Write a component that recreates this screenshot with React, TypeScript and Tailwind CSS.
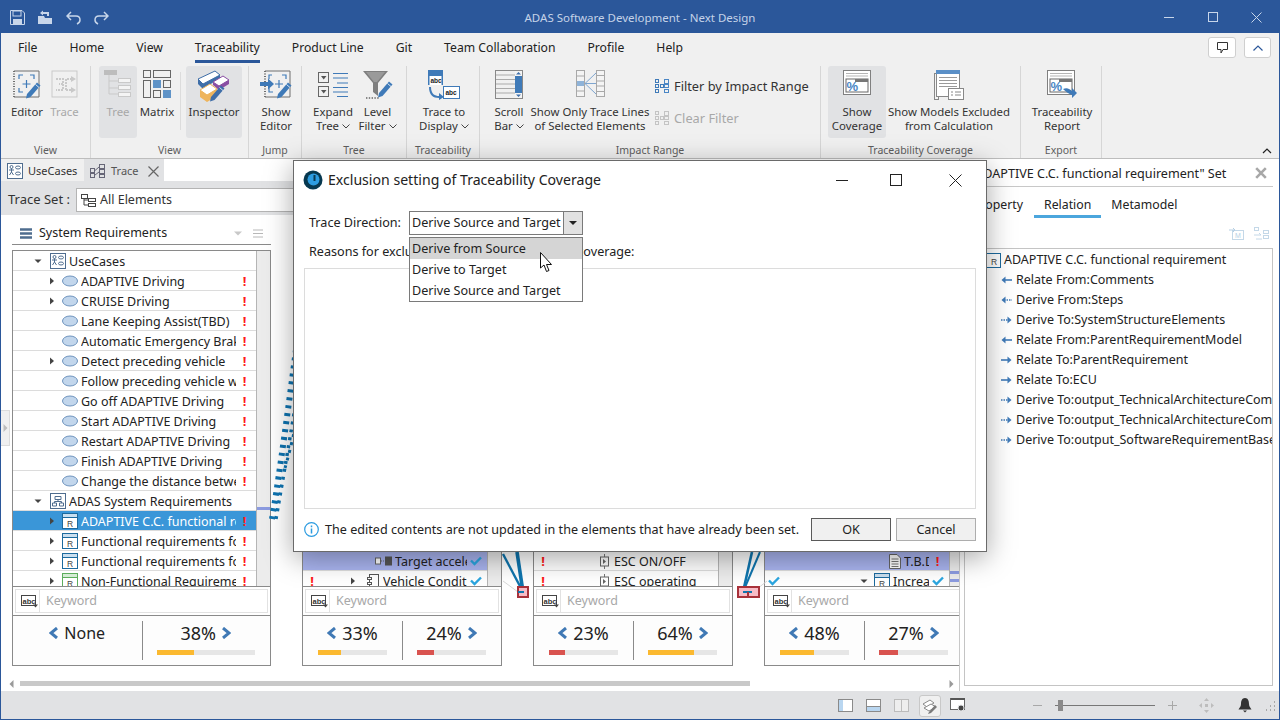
import type { ReactNode } from 'react';

const BLUE = '#3f7ab8';
const GREY = '#6e6e6e';

function Svg({ w, h, children, className }: { w: number; h: number; children: ReactNode; className?: string }) {
  return (
    <svg width={w} height={h} viewBox={`0 0 ${w} ${h}`} fill="none" className={className ? `shrink-0 ${className}` : 'shrink-0'}>
      {children}
    </svg>
  );
}

function Pencil({ x = 0, y = 0, c = BLUE }: { x?: number; y?: number; c?: string }) {
  return (
    <g transform={`translate(${x} ${y})`}>
      <path d="M2 14 L12 2.5 L15.5 5.5 L5.5 17 L1 18.5Z" fill={c} />
      <path d="M10.5 4.5 L14 7.5" stroke="#fff" strokeWidth="0.8" />
    </g>
  );
}

function DashBox({ c = GREY }: { c?: string }) {
  return (
    <>
      <path d="M2 1H27V27H2" stroke={c} strokeWidth="1" />
      <path d="M2 1V27" stroke={c} strokeWidth="2" strokeDasharray="1 1.5" />
    </>
  );
}

function EditorIcon() {
  return (
    <Svg w={31} h={30}>
      <DashBox />
      <path d="M7 9V5H11M18 5H22V9M7 18V22H11" stroke={BLUE} strokeWidth="1.2" />
      <path d="M14.5 10V18M10.5 14H18.5" stroke={BLUE} strokeWidth="1.2" />
      <Pencil x={13} y={10} />
    </Svg>
  );
}

function ShowEditorIcon() {
  return (
    <Svg w={33} h={30}>
      <g transform="translate(3 0)">
        <DashBox />
        <path d="M9 5H6V9M19 5H23V9M6 18V22H10" stroke={BLUE} strokeWidth="1.2" />
        <path d="M16 10V18M12 14H20" stroke={BLUE} strokeWidth="1.2" />
        <Pencil x={13} y={10} />
      </g>
      <path d="M0 12H8V8.5L14 14L8 19.5V16H0Z" fill={BLUE} />
    </Svg>
  );
}

function TraceIcon() {
  return (
    <Svg w={28} h={28}>
      <rect x="1" y="1" width="25" height="26" stroke="#c9c9c9" />
      <path d="M5 9H12V20H5M12 14H8M15 20V9H20M15 20H20" stroke="#c9c9c9" strokeWidth="2" strokeDasharray="2 1" />
      <path d="M20 6L25 9L20 12ZM20 17L25 20L20 23Z" fill="#c9c9c9" />
    </Svg>
  );
}

function TreeIcon() {
  return (
    <Svg w={28} h={28}>
      <rect x="0" y="0" width="13" height="5" fill="#bdbdbd" />
      <path d="M5 5V24H14M5 11H14M5 18H14" stroke="#c9c9c9" />
      <rect x="14.5" y="8.5" width="12" height="4" stroke="#c9c9c9" fill="#f4f4f4" />
      <rect x="14.5" y="15.5" width="12" height="4" stroke="#c9c9c9" fill="#f4f4f4" />
      <rect x="14.5" y="22.5" width="12" height="4" stroke="#c9c9c9" fill="#f4f4f4" />
    </Svg>
  );
}

function MatrixIcon() {
  return (
    <Svg w={28} h={29}>
      <g stroke="#666">
        <rect x="0.5" y="0.5" width="7" height="7" />
        <rect x="10.5" y="0.5" width="17" height="7" />
        <rect x="0.5" y="10.5" width="7" height="17" />
        <rect x="20.5" y="10.5" width="7" height="7" />
        <rect x="10.5" y="20.5" width="7" height="7" />
      </g>
      <rect x="10" y="10" width="8" height="8" fill="#5f93c7" />
      <rect x="20" y="20" width="8" height="8" fill="#5f93c7" />
    </Svg>
  );
}

function InspectorIcon() {
  return (
    <Svg w={34} h={32}>
      <path d="M1 9L18 1L23 5L6 14Z" fill="#fff" stroke="#3f6ea8" />
      <path d="M1 9V14L6 19V14Z" fill="#3f6ea8" />
      <path d="M6 14L23 5V8L6 19Z" fill="#3f6ea8" />
      <path d="M16 12L26 6L32 10L22 16Z" fill="#fff" stroke="#8a4ea3" />
      <path d="M16 12V15L22 20L32 14V10L22 16Z" fill="#8a4ea3" />
      <path d="M3 20L13 14L20 19L10 25Z" fill="#fff" stroke="#eeb45c" />
      <path d="M3 20V27L10 32L20 26V19L10 25Z" fill="#eeb45c" />
      <Pencil x={12} y={13} c="#3f6ea8" />
    </Svg>
  );
}

function ExpandTreeIcon() {
  return (
    <Svg w={31} h={28}>
      <rect x="0.5" y="2.5" width="10" height="10" stroke="#666" />
      <rect x="0.5" y="16.5" width="10" height="10" stroke="#666" />
      <path d="M3 6H8.5L5.7 9.5ZM3 20H8.5L5.7 23.5Z" fill="#555" />
      <path d="M15 3.5H30M15 8H30M19 13H30M15 17.5H30M15 22H30M19 26.5H30" stroke={BLUE} />
    </Svg>
  );
}

function LevelFilterIcon() {
  return (
    <Svg w={32} h={30}>
      <path d="M1 1H26L16 13V26L11 22V13Z" fill="#7f7f7f" />
      <path d="M4 2H23L15 12H12Z" fill="#9a9a9a" />
      <Pencil x={15} y={9} />
      <path d="M4 28H18" stroke="#666" strokeWidth="1.4" strokeDasharray="1.4 1.4" />
    </Svg>
  );
}

function TraceDisplayIcon() {
  return (
    <Svg w={33} h={30}>
      <rect x="0" y="0" width="15" height="15" fill="#3f7ab8" />
      <rect x="1.5" y="6" width="12" height="9" fill="#fff" />
      <text x="2.5" y="13" fontSize="6.5" fontWeight="700" fill="#222" fontFamily="Liberation Sans">abc</text>
      <rect x="15.5" y="16.5" width="16" height="12" fill="#fff" stroke={BLUE} />
      <text x="17.5" y="25" fontSize="6.5" fontWeight="700" fill="#222" fontFamily="Liberation Sans">abc</text>
      <path d="M3 17C3 24 7 26 11 26V23L16 27L11 30V28C5 28 1 25 1 17Z" fill={BLUE} />
    </Svg>
  );
}

function ScrollBarIcon() {
  return (
    <Svg w={28} h={29}>
      <rect x="0.5" y="0.5" width="27" height="28" stroke="#888" />
      <path d="M1 5H20M1 9.5H20M1 14H20M1 18.5H20M1 23H20" stroke="#aaa" />
      <rect x="20" y="1" width="7" height="27" fill="#f4f4f4" />
      <rect x="20" y="6" width="7" height="17" fill="#3f7ab8" />
      <path d="M21 4.5L23.5 2L26 4.5ZM21 24.5L23.5 27L26 24.5Z" fill="#3f6ea8" />
    </Svg>
  );
}

function ShowOnlyIcon() {
  return (
    <Svg w={29} h={27}>
      <g stroke="#a8a8a8" fill="#f4f4f4">
        <rect x="0.5" y="0.5" width="8" height="26" />
        <rect x="20.5" y="0.5" width="8" height="26" />
      </g>
      <path d="M1 6H8M1 21H8M21 5.5H28M21 11H28M21 16H28M21 21.5H28" stroke="#a8a8a8" />
      <rect x="1" y="11" width="7" height="5" fill="#8fb3d8" />
      <path d="M9 13.5L20 3M9 13.5H20M9 13.5L20 24" stroke="#7ea5cf" />
    </Svg>
  );
}

function FilterSmall({ c, accent }: { c: string; accent: string }) {
  return (
    <Svg w={14} h={14}>
      <g stroke={accent}>
        <rect x="0.5" y="0.5" width="3" height="3" />
        <rect x="0.5" y="5.5" width="3" height="3" />
        <rect x="0.5" y="10.5" width="3" height="3" />
        <rect x="5.5" y="5.5" width="3" height="3" />
      </g>
      <g stroke={c}>
        <rect x="9.5" y="0.5" width="4" height="4" />
        <rect x="9.5" y="5.5" width="4" height="3" />
        <rect x="9.5" y="10.5" width="4" height="3" />
      </g>
    </Svg>
  );
}

function CoverageDoc() {
  return (
    <>
      <rect x="0.5" y="0.5" width="27" height="24" fill="#fff" stroke="#808080" />
      <path d="M3 3.5H25M3 6H25" stroke="#b5b5b5" />
      <rect x="3" y="9" width="22" height="13" fill="#fff" stroke="#666" />
      <rect x="12" y="9" width="13" height="3" fill="#777" />
      <text x="3.5" y="21" fontSize="13" fontWeight="700" fill="#4a86c5" fontFamily="Liberation Sans">%</text>
    </>
  );
}

function CoverageIcon() {
  return (
    <Svg w={28} h={26}>
      <CoverageDoc />
    </Svg>
  );
}

function ReportIcon() {
  return (
    <Svg w={31} h={30}>
      <CoverageDoc />
      <path d="M16 19C20 17 23 19 25 21V18L30 23L25 28V25C22 24 19 22 16 19Z" fill={BLUE} />
    </Svg>
  );
}

function ModelsIcon() {
  return (
    <Svg w={31} h={31}>
      <rect x="0.5" y="3.5" width="4" height="26" fill="#f4f4f4" stroke="#888" />
      <rect x="2.5" y="0.5" width="23" height="26" fill="#fff" stroke="#888" />
      <rect x="2" y="0" width="24" height="4" fill="#5a8fc7" />
      <path d="M5 7.5H23M5 10.5H23M5 13.5H23M5 16.5H23" stroke="#9a9a9a" />
      <rect x="14.5" y="18.5" width="15" height="11" fill="#fff" stroke="#888" />
      <path d="M17 22H19M21 22H27M17 25H19M21 25H27" stroke="#888" />
    </Svg>
  );
}

function UseCaseBox() {
  return (
    <Svg w={16} h={16}>
      <rect x="0.5" y="0.5" width="15" height="15" fill="#fff" stroke="#4f6d8f" />
      <circle cx="4.5" cy="4" r="1.5" stroke="#4f6d8f" />
      <path d="M4.5 5.5V9M2 7H7M4.5 9L2.5 12M4.5 9L6.5 12" stroke="#4f6d8f" />
      <ellipse cx="11" cy="4.5" rx="2.5" ry="1.5" stroke="#4f6d8f" />
      <ellipse cx="11" cy="10.5" rx="2.5" ry="1.5" stroke="#4f6d8f" />
    </Svg>
  );
}

function ReqPkgBox() {
  return (
    <Svg w={16} h={16}>
      <rect x="0.5" y="0.5" width="15" height="15" fill="#fff" stroke="#4f6d8f" />
      <path d="M5 3.5H11V6.5H5ZM2.5 10H6.5V13H2.5ZM9.5 10H13.5V13H9.5ZM8 6.5V8.5M4.5 10V8.5H11.5V10" stroke="#4f6d8f" />
    </Svg>
  );
}

function UseCaseOval() {
  return (
    <Svg w={16} h={12}>
      <ellipse cx="8" cy="6" rx="7.5" ry="5" fill="#c2d6ec" stroke="#6f94be" />
    </Svg>
  );
}

function ReqIcon({ c = '#1c6a9e', head = '#c9dff0' }: { c?: string; head?: string }) {
  return (
    <Svg w={16} h={16}>
      <rect x="0.5" y="0.5" width="15" height="15" fill="#fff" stroke={c} />
      <rect x="1" y="1" width="14" height="3.5" fill={head} />
      <path d="M1 4.5H15" stroke={c} />
      <text x="5" y="13.5" fontSize="8.5" fill="#444" fontFamily="Liberation Sans">R</text>
    </Svg>
  );
}

function Exp({ open }: { open?: boolean }) {
  if (open)
    return (
      <Svg w={8} h={8}>
        <path d="M0.5 2.5H7.5L4 6Z" fill="#444" />
      </Svg>
    );
  return (
    <Svg w={8} h={8}>
      <path d="M2 0.5V7.5L6 4Z" fill="#444" />
    </Svg>
  );
}

function Check() {
  return (
    <Svg w={12} h={10}>
      <path d="M1 4.5L4.5 8L11 1.5" stroke="#2ba6e0" strokeWidth="2.4" />
    </Svg>
  );
}

function Bang() {
  return <span className="font-bold text-[#ff1a1a] w-[6px] text-center text-[13px] leading-none">!</span>;
}

function AbcIcon() {
  return (
    <Svg w={17} h={13}>
      <rect x="0.5" y="0.5" width="14" height="10" stroke="#444" fill="#fff" />
      <text x="1.5" y="8.5" fontSize="7.5" fontWeight="700" fill="#333" fontFamily="Liberation Sans">abc</text>
      <path d="M12 9.5H17L14.5 12.5Z" fill="#444" />
    </Svg>
  );
}

function Chev({ right }: { right?: boolean }) {
  return (
    <Svg w={10} h={12}>
      <path d={right ? 'M2 1L8 6L2 11' : 'M8 1L2 6L8 11'} stroke="#4079b5" strokeWidth="3" />
    </Svg>
  );
}

function SmallChevron() {
  return (
    <Svg w={8} h={5} className="inline-block ml-[3px] align-middle">
      <path d="M0.5 0.5L4 4L7.5 0.5" stroke="#444" />
    </Svg>
  );
}

function RibbonBtn({
  icon,
  lines,
  w,
  active,
  disabled,
  more,
}: {
  icon: ReactNode;
  lines: string[];
  w: string;
  active?: boolean;
  disabled?: boolean;
  more?: boolean;
}) {
  return (
    <div className={`${w} h-[72px] shrink-0 flex flex-col items-center rounded-[3px] ${active ? 'bg-[#e1e2e4]' : ''}`}>
      <div className="h-[39px] pt-[4px] flex items-start justify-center">{icon}</div>
      <div className={`text-center leading-[14px] whitespace-nowrap ${disabled ? 'text-[#a8a8a8]' : 'text-[#333]'}`}>
        {lines.map((l, i) => (
          <div key={l}>
            {l}
            {more && i === lines.length - 1 && <SmallChevron />}
          </div>
        ))}
      </div>
    </div>
  );
}

function Group({ label, w, pl, children }: { label: string; w: string; pl: string; children: ReactNode }) {
  return (
    <div className={`${w} shrink-0 flex flex-col`}>
      <div className={`h-[72px] mt-[3px] flex ${pl}`}>{children}</div>
      <div className="h-[20px] pt-[5px] flex items-center justify-center text-[#5e5e5e] text-[10.5px] border-r border-[#d6d6d6]">{label}</div>
    </div>
  );
}

function Ribbon() {
  return (
    <div className="h-[96px] shrink-0 bg-[#f0f0f0] border-b border-[#bdbdbd] flex text-[11.4px] relative">
      <Group label="View" w="w-[90px]" pl="pl-[7px] border-r border-[#d6d6d6]">
        <RibbonBtn w="w-[38px]" icon={<EditorIcon />} lines={['Editor']} />
        <RibbonBtn w="w-[37px]" icon={<TraceIcon />} lines={['Trace']} disabled />
      </Group>
      <Group label="View" w="w-[158px]" pl="pl-[8px] border-r border-[#d6d6d6]">
        <RibbonBtn w="w-[38px]" icon={<TreeIcon />} lines={['Tree']} active disabled />
        <RibbonBtn w="w-[40px]" icon={<MatrixIcon />} lines={['Matrix']} />
        <div className="w-px h-[58px] bg-[#dcdcdc] ml-[3px] mr-[5px] mt-[6px]" />
        <RibbonBtn w="w-[56px]" icon={<InspectorIcon />} lines={['Inspector']} active />
      </Group>
      <Group label="Jump" w="w-[53px]" pl="pl-[4px] border-r border-[#d6d6d6]">
        <RibbonBtn w="w-[46px]" icon={<ShowEditorIcon />} lines={['Show', 'Editor']} />
      </Group>
      <Group label="Tree" w="w-[105px]" pl="pl-[8px] border-r border-[#d6d6d6]">
        <RibbonBtn w="w-[46px]" icon={<ExpandTreeIcon />} lines={['Expand', 'Tree']} more />
        <RibbonBtn w="w-[43px]" icon={<LevelFilterIcon />} lines={['Level', 'Filter']} more />
      </Group>
      <Group label="Traceability" w="w-[73px]" pl="pl-[7px] border-r border-[#d6d6d6]">
        <RibbonBtn w="w-[60px]" icon={<TraceDisplayIcon />} lines={['Trace to', 'Display']} more />
      </Group>
      <Group label="Impact Range" w="w-[341px]" pl="pl-[9px] border-r border-[#d6d6d6]">
        <RibbonBtn w="w-[40px]" icon={<ScrollBarIcon />} lines={['Scroll', 'Bar']} more />
        <RibbonBtn w="w-[122px]" icon={<ShowOnlyIcon />} lines={['Show Only Trace Lines', 'of Selected Elements']} />
        <div className="flex flex-col ml-[4px] mt-[13px] gap-[18px] text-[12.8px] leading-[14px]">
          <div className="flex items-center gap-[5px] text-[#333]">
            <FilterSmall c="#4a86c5" accent="#3f7ab8" />
            Filter by Impact Range
          </div>
          <div className="flex items-center gap-[5px] text-[#a8a8a8]">
            <FilterSmall c="#c4c4c4" accent="#c4c4c4" />
            Clear Filter
          </div>
        </div>
      </Group>
      <Group label="Traceability Coverage" w="w-[200px]" pl="pl-[7px] border-r border-[#d6d6d6]">
        <RibbonBtn w="w-[58px]" icon={<CoverageIcon />} lines={['Show', 'Coverage']} active />
        <RibbonBtn w="w-[126px]" icon={<ModelsIcon />} lines={['Show Models Excluded', 'from Calculation']} />
      </Group>
      <Group label="Export" w="w-[81px]" pl="pl-[7px] border-r border-[#d6d6d6]">
        <RibbonBtn w="w-[68px]" icon={<ReportIcon />} lines={['Traceability', 'Report']} />
      </Group>
      <Svg w={10} h={6} className="absolute right-[7px] bottom-[4px]">
        <path d="M1 5L5 1L9 5" stroke="#222" strokeWidth="1.2" />
      </Svg>
    </div>
  );
}

type RowData = {
  ind?: number;
  exp?: 'open' | 'closed';
  icon?: ReactNode;
  label?: string;
  mark?: 'bang' | 'check';
  before?: 'bang' | 'check';
  selected?: boolean;
  hi?: boolean;
};

function Row({ r }: { r: RowData }) {
  return (
    <div
      className={`h-[20px] shrink-0 flex items-center border-b border-[#dcdcdc] pr-[3px] pt-px ${
        r.selected ? 'bg-[#3a96d8] text-white border-[#3a96d8]' : r.hi ? 'bg-[#a9b4ef] text-[#222]' : 'text-[#222]'
      }`}
    >
      <div className="w-[8px] shrink-0 ml-[5px] flex justify-center">
        {r.before === 'bang' && <Bang />}
        {r.before === 'check' && <Check />}
      </div>
      <div className="flex items-center min-w-0 flex-1" style={{ paddingLeft: r.ind ?? 0 }}>
        <div className="w-[8px] shrink-0 flex items-center mr-[6px]">{r.exp && <Exp open={r.exp === 'open'} />}</div>
        <div className="shrink-0 mr-[3px] flex items-center">{r.icon}</div>
        <div className="flex-1 min-w-0 overflow-hidden whitespace-nowrap pt-[2px]">{r.label}</div>
      </div>
      <div className="w-[17px] shrink-0 flex justify-center">
        {r.mark === 'bang' && <Bang />}
        {r.mark === 'check' && <Check />}
      </div>
    </div>
  );
}

const req = <ReqIcon />;
const pkg = (icon: ReactNode) => <div className="ml-[2px]">{icon}</div>;
const col1Rows: RowData[] = [
  { ind: 8, exp: 'open', icon: pkg(<UseCaseBox />), label: 'UseCases' },
  { ind: 22, exp: 'closed', icon: <UseCaseOval />, label: 'ADAPTIVE Driving', mark: 'bang' },
  { ind: 22, exp: 'closed', icon: <UseCaseOval />, label: 'CRUISE Driving', mark: 'bang' },
  { ind: 22, icon: <UseCaseOval />, label: 'Lane Keeping Assist(TBD)', mark: 'bang' },
  { ind: 22, icon: <UseCaseOval />, label: 'Automatic Emergency Brake', mark: 'bang' },
  { ind: 22, exp: 'closed', icon: <UseCaseOval />, label: 'Detect preceding vehicle', mark: 'bang' },
  { ind: 22, icon: <UseCaseOval />, label: 'Follow preceding vehicle with', mark: 'bang' },
  { ind: 22, icon: <UseCaseOval />, label: 'Go off ADAPTIVE Driving', mark: 'bang' },
  { ind: 22, icon: <UseCaseOval />, label: 'Start ADAPTIVE Driving', mark: 'bang' },
  { ind: 22, icon: <UseCaseOval />, label: 'Restart ADAPTIVE Driving', mark: 'bang' },
  { ind: 22, icon: <UseCaseOval />, label: 'Finish ADAPTIVE Driving', mark: 'bang' },
  { ind: 22, icon: <UseCaseOval />, label: 'Change the distance between', mark: 'bang' },
  { ind: 8, exp: 'open', icon: pkg(<ReqPkgBox />), label: 'ADAS System Requirements' },
  { ind: 22, exp: 'closed', icon: req, label: 'ADAPTIVE C.C. functional requirement', mark: 'bang', selected: true },
  { ind: 22, exp: 'closed', icon: req, label: 'Functional requirements for', mark: 'bang' },
  { ind: 22, exp: 'closed', icon: req, label: 'Functional requirements for', mark: 'bang' },
  { ind: 22, exp: 'closed', icon: <ReqIcon c="#5cad5c" head="#d5ecd5" />, label: 'Non-Functional Requirements', mark: 'bang' },
];

const blank: RowData[] = Array.from({ length: 15 }, () => ({}));

const portIcon = (
  <Svg w={17} h={10}>
    <rect x="0.5" y="2" width="5" height="6" fill="#fff" stroke="#666" />
    <path d="M6 5H9" stroke="#666" strokeDasharray="1 1" />
    <rect x="10" y="0.5" width="7" height="9" fill="#555" />
  </Svg>
);
const compIcon = (
  <Svg w={13} h={15}>
    <path d="M6.5 0V15" stroke="#777" />
    <rect x="2.5" y="3" width="8" height="9" fill="#fff" stroke="#666" />
    <path d="M5 5L8 7.5L5 10Z" fill="#666" />
  </Svg>
);
const vehIcon = (
  <div className="ml-[4px]">
    <Svg w={13} h={14}>
      <rect x="2.5" y="0.5" width="9" height="13" fill="#fff" stroke="#555" />
      <rect x="0.5" y="3.5" width="4" height="2" fill="#fff" stroke="#555" />
      <rect x="0.5" y="8.5" width="4" height="2" fill="#fff" stroke="#555" />
    </Svg>
  </div>
);
const docIcon = (
  <Svg w={12} h={15}>
    <path d="M0.5 0.5H8L11.5 4V14.5H0.5Z" fill="#fff" stroke="#666" />
    <path d="M2.5 5H9.5M2.5 7.5H9.5M2.5 10H9.5M2.5 12.5H9.5" stroke="#777" />
  </Svg>
);

function Stat({ side, text, pct, bar }: { side: 'l' | 'r'; text: string; pct?: number; bar?: string }) {
  return (
    <div className="flex-1 flex flex-col items-center px-[15px] min-w-0">
      <div className={`flex items-center gap-[5px] h-[24px] mt-[5px] text-[#222] ${pct === undefined ? 'text-[16px]' : 'text-[18px]'}`}>
        {side === 'l' && <Chev />}
        <span>{text}</span>
        {side === 'r' && <Chev right />}
      </div>
      {pct !== undefined && (
        <div className="w-full h-[5px] bg-[#e6e6e6] mt-[5px]">
          <div className={`h-full ${bar}`} style={{ width: `${pct}%` }} />
        </div>
      )}
    </div>
  );
}

const YELLOW = 'bg-[#fbb930]';
const RED = 'bg-[#d9534f]';

function Column({
  w,
  rows,
  children,
  marker,
}: {
  w: string;
  rows: RowData[];
  children: ReactNode;
  marker?: ReactNode;
}) {
  return (
    <div className={`${w} h-[444px] shrink-0 flex flex-col text-[12.5px]`}>
      <div className="h-[23px] shrink-0 flex items-center border-b border-[#8a8a8a] pl-[8px] pr-[8px] text-[#222]">
        <Svg w={12} h={11}>
          <path d="M0 1.5H12M0 5.5H12M0 9.5H12" stroke="#4f6d8f" strokeWidth="2.4" />
        </Svg>
        <span className="ml-[7px] flex-1">System Requirements</span>
        <Svg w={10} h={5} className="mr-[10px]">
          <path d="M1 0.5H9L5 4.5Z" fill="#c8c8c8" />
        </Svg>
        <Svg w={10} h={9}>
          <path d="M0 1H10M0 4.5H10M0 8H10" stroke="#b8b8b8" />
        </Svg>
      </div>
      <div className="h-[5px] shrink-0" />
      <div className="flex-1 min-h-0 flex border-t border-l border-r border-[#8a8a8a] overflow-hidden">
        <div className="flex-1 min-w-0 flex flex-col bg-white">
          {rows.map((r, i) => (
            <Row key={i} r={r} />
          ))}
        </div>
        <div className="w-[14px] shrink-0 bg-[#ececec] border-l border-[#b5b5b5] relative">{marker}</div>
      </div>
      <div className="h-[30px] shrink-0 border border-[#8a8a8a] bg-white p-[2px]">
        <div className="h-full border border-[#e2e2e2] flex items-center">
          <div className="w-[24px] pl-[5px] h-full flex items-center border-r border-[#e2e2e2]">
            <AbcIcon />
          </div>
          <span className="ml-[6px] text-[#a8a8a8]">Keyword</span>
        </div>
      </div>
      <div className="h-[50px] shrink-0 border border-t-0 border-[#8a8a8a] flex bg-[#fdfdfd] relative">
        {children}
        <div className="absolute left-1/2 top-[5px] bottom-[5px] w-px bg-[#8a8a8a]" />
      </div>
    </div>
  );
}

function Canvas() {
  return (
    <div className="flex-1 min-h-0 bg-white flex flex-col relative">
      <div className="flex gap-[31px] pl-[11px] pt-[7px]">
        <Column w="w-[259px]" rows={col1Rows} marker={<div className="absolute left-0 right-0 top-[256px] h-[3px] bg-[#8c9be0]" />}>
          <Stat side="l" text="None" />
          <Stat side="r" text="38%" pct={38} bar={YELLOW} />
        </Column>
        <Column
          w="w-[200px]"
          rows={[
            ...blank,
            { ind: 45, icon: portIcon, label: 'Target acceleration', mark: 'check', hi: true },
            { before: 'bang', ind: 33, exp: 'closed', icon: vehIcon, label: 'Vehicle Condition', mark: 'check' },
          ]}
        >
          <Stat side="l" text="33%" pct={34} bar={YELLOW} />
          <Stat side="r" text="24%" pct={24} bar={RED} />
        </Column>
        <Column
          w="w-[200px]"
          rows={[
            ...blank,
            { before: 'bang', ind: 37, icon: compIcon, label: 'ESC ON/OFF' },
            { before: 'bang', ind: 37, icon: compIcon, label: 'ESC operating' },
          ]}
        >
          <Stat side="l" text="23%" pct={23} bar={RED} />
          <Stat side="r" text="64%" pct={66} bar={YELLOW} />
        </Column>
        <Column
          w="w-[200px]"
          rows={[
            ...blank,
            { ind: 97, icon: docIcon, label: 'T.B.D', mark: 'bang', hi: true },
            { before: 'check', ind: 82, exp: 'open', icon: req, label: 'Increase', mark: 'check' },
          ]}
          marker={<div className="absolute left-0 right-0 top-[320px] h-[11px] border-y-[3px] border-[#8c9be0] bg-[#ececec]" />}
        >
          <Stat side="l" text="48%" pct={49} bar={YELLOW} />
          <Stat side="r" text="27%" pct={27} bar={RED} />
        </Column>
      </div>
      <div className="flex items-center h-[5px] mt-[15px] relative">
        <Svg w={5} h={8} className="ml-[8px] mr-[6px]">
          <path d="M4.5 0V8L0.5 4Z" fill="#9a9a9a" />
        </Svg>
        <div className="w-[730px] h-[5px] bg-[#c9c9c9]" />
        <Svg w={5} h={8} className="absolute left-[948px]">
          <path d="M0.5 0V8L4.5 4Z" fill="#9a9a9a" />
        </Svg>
      </div>
      <div className="absolute left-0 top-[195px] w-[9px] h-[36px] bg-[#f0f0f0] border border-l-0 border-[#dcdcdc] flex items-center justify-center">
        <Svg w={5} h={8}>
          <path d="M0.5 0V8L4.5 4Z" fill="#bdbdbd" />
        </Svg>
      </div>
    </div>
  );
}

function ReqFlowIcon() {
  return (
    <Svg w={15} h={14}>
      <g stroke="#667">
        <rect x="0.5" y="4.5" width="4" height="4" />
        <rect x="0.5" y="9.5" width="4" height="4" />
        <rect x="9.5" y="0.5" width="5" height="4" />
        <rect x="9.5" y="5.5" width="5" height="4" />
        <rect x="9.5" y="10.5" width="5" height="3" />
        <path d="M5 6.5L9 3M5 11L9 8" />
      </g>
    </Svg>
  );
}

function LeftPane() {
  return (
    <div className="w-[958px] shrink-0 flex flex-col overflow-hidden">
      <div className="h-[22px] shrink-0 flex items-center text-[11px] bg-white">
        <div className="w-[83px] h-full bg-[#f0f0f0] flex items-center pl-[6px] gap-[5px] text-[#333] pt-[2px]">
          <UseCaseBox />
          UseCases
        </div>
        <div className="w-[80px] h-full bg-[#e1e2e4] flex items-center pl-[6px] gap-[6px] text-[#555] pt-[2px]">
          <ReqFlowIcon />
          Trace
          <Svg w={11} h={11} className="ml-[3px]">
            <path d="M0.5 0.5L10.5 10.5M10.5 0.5L0.5 10.5" stroke="#666" strokeWidth="1.2" />
          </Svg>
        </div>
      </div>
      <div className="h-[34px] shrink-0 bg-[#e1e2e4] flex items-center pl-[7px] pt-[4px] text-[12.5px] text-[#333]">
        <span className="w-[68px] shrink-0 whitespace-nowrap text-[13px]">Trace Set :</span>
        <div className="flex-1 h-[24px] bg-white border border-[#b4b4b4] flex items-center pl-[4px] gap-[4px]">
          <Svg w={15} h={13}>
            <rect x="0.5" y="0.5" width="6" height="4" stroke="#444" />
            <rect x="7.5" y="4.5" width="7" height="3" stroke="#444" />
            <rect x="7.5" y="9.5" width="7" height="3" stroke="#444" />
            <path d="M3 5V11H7M3 6H7" stroke="#444" />
          </Svg>
          All Elements
        </div>
      </div>
      <Canvas />
    </div>
  );
}

function RelArrow({ dir, dashed }: { dir: 'l' | 'r'; dashed?: boolean }) {
  const line = dashed ? (
    <path d={dir === 'l' ? 'M3 5H11' : 'M0 5H8'} stroke={BLUE} strokeWidth="1.6" strokeDasharray="1.5 1" />
  ) : (
    <path d={dir === 'l' ? 'M2 5H11' : 'M0 5H9'} stroke={BLUE} strokeWidth="1.6" />
  );
  return (
    <Svg w={11} h={10}>
      {line}
      <path d={dir === 'l' ? 'M0.5 5L4.5 1.5V8.5Z' : 'M10.5 5L6.5 1.5V8.5Z'} fill={BLUE} />
    </Svg>
  );
}

const relRows: { d: 'l' | 'r'; dash?: boolean; t: string }[] = [
  { d: 'l', t: 'Relate From:Comments' },
  { d: 'l', dash: true, t: 'Derive From:Steps' },
  { d: 'r', dash: true, t: 'Derive To:SystemStructureElements' },
  { d: 'l', t: 'Relate From:ParentRequirementModel' },
  { d: 'r', t: 'Relate To:ParentRequirement' },
  { d: 'r', t: 'Relate To:ECU' },
  { d: 'r', dash: true, t: 'Derive To:output_TechnicalArchitectureComponents' },
  { d: 'r', dash: true, t: 'Derive To:output_TechnicalArchitectureComponents' },
  { d: 'r', dash: true, t: 'Derive To:output_SoftwareRequirementBaseline' },
];

function RightPane() {
  return (
    <div className="flex-1 min-w-0 bg-white border-l border-[#c8c8c8] flex flex-col pl-[4px] pr-[6px] pb-[5px] text-[12.5px] text-[#222]">
      <div className="h-[28px] shrink-0 border-b border-[#c8c8c8] flex items-center pl-[7px] pr-[6px] whitespace-nowrap text-[12.6px]">
        <span className="flex-1 pt-[3px]">&quot;ADAPTIVE C.C. functional requirement&quot; Set</span>
        <Svg w={12} h={12}>
          <path d="M1.2 1.2L10.8 10.8M10.8 1.2L1.2 10.8" stroke="#a8a8a8" strokeWidth="2.6" />
        </Svg>
      </div>
      <div className="h-[31px] shrink-0 flex pl-[9px] gap-[10px] items-center text-[12.3px]">
        <span className="w-[51px] pt-[5px]">Property</span>
        <div className="h-full flex items-center px-[10px] border-b-[3px] border-[#4ba6dd] pt-[8px]">Relation</div>
        <span className="pt-[5px]">Metamodel</span>
      </div>
      <div className="h-[30px] shrink-0 flex justify-end items-center pr-[4px] gap-[10px]">
        <Svg w={15} h={13}>
          <rect x="3.5" y="3.5" width="11" height="9" stroke="#c4d8e8" />
          <path d="M0 3H6L4 1M6 3L4 5" stroke="#b6cfe3" />
          <text x="6" y="11" fontSize="7" fill="#b6cfe3" fontFamily="Liberation Sans">M</text>
        </Svg>
        <Svg w={15} h={13}>
          <g stroke="#c4d8e8">
            <rect x="0.5" y="0.5" width="4" height="3" />
            <rect x="9.5" y="3.5" width="5" height="3" />
            <rect x="9.5" y="8.5" width="5" height="3" />
            <path d="M0 8H7M7 8L5 6M2 12H8" />
          </g>
        </Svg>
      </div>
      <div className="flex-1 min-h-0 border border-[#c4c4c4] overflow-hidden whitespace-nowrap pt-px">
        <div className="h-[20px] flex items-center pl-[21px] gap-[3px]">
          <Svg w={15} h={15}>
            <rect x="0.5" y="0.5" width="14" height="14" fill="#fff" stroke="#1c6a9e" />
            <text x="5" y="11.5" fontSize="8.5" fill="#444" fontFamily="Liberation Sans">R</text>
          </Svg>
          ADAPTIVE C.C. functional requirement
        </div>
        {relRows.map((r, i) => (
          <div key={i} className="h-[20px] flex items-center pl-[36px] gap-[4px]">
            <RelArrow dir={r.d} dashed={r.dash} />
            {r.t}
          </div>
        ))}
      </div>
    </div>
  );
}

function StatusBar() {
  return (
    <div className="flex-1 min-h-0 bg-[#e1e2e4] relative flex items-center pl-[837px]">
      <Svg w={15} h={13}>
        <rect x="0.5" y="0.5" width="14" height="12" fill="#fff" stroke="#8a8a8a" />
        <rect x="1" y="1" width="4" height="11" fill="#b9d6f0" />
      </Svg>
      <Svg w={15} h={13} className="ml-[13px]">
        <rect x="0.5" y="0.5" width="14" height="12" fill="#fff" stroke="#8a8a8a" />
        <rect x="1" y="8" width="13" height="4" fill="#b9d6f0" />
        <path d="M1 7.5H14" stroke="#8a8a8a" />
      </Svg>
      <Svg w={15} h={13} className="ml-[13px]">
        <rect x="0.5" y="0.5" width="14" height="12" fill="#eee" stroke="#bcbcbc" />
        <path d="M7.5 1V12" stroke="#bcbcbc" />
      </Svg>
      <div className="ml-[10px] w-[22px] h-[22px] mt-[1px] rounded-[3px] border border-[#c8c8c8] bg-[#f0f0f0] flex items-center justify-center">
        <Svg w={16} h={16}>
          <path d="M1 6L8 2L12 5L5 9Z" fill="#fff" stroke="#8a8a8a" />
          <path d="M2 10L9 6L14 9L7 13Z" fill="#fff" stroke="#8a8a8a" />
          <path d="M7 14L13 7L15 9L9 15L6 16Z" fill="#7a7a7a" />
        </Svg>
      </div>
      <Svg w={16} h={14} className="ml-[9px]">
        <rect x="0.5" y="0.5" width="14" height="11" fill="#fff" stroke="#666" />
        <rect x="1" y="0" width="14" height="2" fill="#555" />
        <circle cx="11" cy="10" r="3" fill="#444" stroke="#e1e2e4" />
      </Svg>
      <div className="ml-[67px] w-[9px] h-px bg-[#a8a8a8]" />
      <div className="ml-[13px] w-[100px] h-px bg-[#777] relative">
        <div className="absolute left-[3px] -top-[5px] w-[5px] h-[11px] bg-[#8a8a8a]" />
      </div>
      <Svg w={11} h={11} className="ml-[12px]">
        <path d="M5.5 1V10M1 5.5H10" stroke="#a8a8a8" />
      </Svg>
      <Svg w={15} h={15} className="ml-[21px]">
        <path d="M7.5 0L10 3H5ZM7.5 15L10 12H5ZM0 7.5L3 5V10ZM15 7.5L12 5V10Z" fill="#bdbdbd" />
        <rect x="6" y="6" width="3" height="3" fill="#bdbdbd" />
      </Svg>
      <Svg w={14} h={16} className="ml-[24px]">
        <path d="M7 1C10 1 11 4 11 7C11 10 13 11 13.5 12.5H0.5C1 11 3 10 3 7C3 4 4 1 7 1Z" fill="#333" />
        <path d="M5 13.5H9L7 15.5Z" fill="#333" />
      </Svg>
      <Svg w={12} h={12} className="ml-[13px] mt-[4px]">
        <path d="M9 1H11M5 5H7M9 5H11M1 9H3M5 9H7M9 9H11" stroke="#a8a8a8" strokeWidth="2" strokeDasharray="1 1" />
      </Svg>
    </div>
  );
}

function Connectors() {
  return (
    <svg width="1280" height="720" viewBox="0 0 1280 720" fill="none" className="absolute -left-px -top-px pointer-events-none">
      <g stroke="#0e73b0" strokeLinecap="butt">
        <path d="M272 519C277 490 284 440 296 350" strokeWidth="6" strokeDasharray="3 5" />
        <path d="M276 519C281 490 288 450 297 396" strokeWidth="3.5" strokeDasharray="3 5" />
        <path d="M285 468C288 458 292 442 297 420" strokeWidth="3" strokeDasharray="3 5" />
      </g>
      <path d="M503 554L522 590" stroke="#0f75ae" strokeWidth="2.4" />
      <path d="M517 552L523 592" stroke="#0f75ae" strokeWidth="3.6" />
      <path d="M503 581L518 592" stroke="#d8d8d8" />
      <path d="M752 552L743 592" stroke="#0f75ae" strokeWidth="2.6" />
      <path d="M760 552L743 592" stroke="#0f75ae" strokeWidth="2" />
      <path d="M752 593L767 581" stroke="#d8d8d8" />
      <rect x="518" y="587" width="10" height="10" fill="#f8bcc6" stroke="#a9323a" strokeWidth="2" />
      <rect x="738" y="587" width="21" height="10" fill="#f8bcc6" stroke="#a9323a" strokeWidth="2" />
      <path d="M518 592L524 592" stroke="#0f75ae" strokeWidth="2" />
      <path d="M743 592H752" stroke="#0f75ae" strokeWidth="2" />
      <path d="M748 592V597" stroke="#a9323a" strokeWidth="2" />
    </svg>
  );
}

function Dialog() {
  return (
    <div className="absolute left-[292px] top-[159px] w-[694px] h-[392px] bg-white border border-[#6a6a6a] shadow-[0_6px_26px_rgba(0,0,0,0.35)] flex flex-col text-[12.6px] text-[#222]">
      <div className="h-[38px] shrink-0 flex items-center pl-[9px]">
        <Svg w={20} h={20}>
          <circle cx="10" cy="10" r="9.5" fill="#07384f" />
          <circle cx="10.5" cy="9.5" r="6" fill="#2d9ce0" />
          <path d="M11.5 5V11" stroke="#0a3b52" strokeWidth="2" />
        </Svg>
        <span className="ml-[5px] text-[14.1px]">Exclusion setting of Traceability Coverage</span>
        <div className="flex-1" />
        <div className="w-[12px] h-px bg-[#222]" />
        <Svg w={12} h={12} className="ml-[42px]">
          <rect x="0.5" y="0.5" width="11" height="11" stroke="#222" />
        </Svg>
        <Svg w={13} h={13} className="ml-[47px] mr-[24px]">
          <path d="M0.5 0.5L12.5 12.5M12.5 0.5L0.5 12.5" stroke="#222" />
        </Svg>
      </div>
      <div className="flex items-center mt-[12px] pl-[15px]">
        <span className="w-[100px]">Trace Direction:</span>
        <div className="w-[174px] h-[24px] border border-[#7a7a7a] flex items-center">
          <span className="flex-1 pl-[2px] pt-px">Derive Source and Target</span>
          <div className="w-[19px] h-full bg-[#e1e1e1] border-l border-[#7a7a7a] flex items-center justify-center">
            <Svg w={8} h={4}>
              <path d="M0 0H8L4 4Z" fill="#222" />
            </Svg>
          </div>
        </div>
      </div>
      <div className="mt-[6px] pl-[15px] pt-[2px] h-[20px] flex items-center whitespace-nowrap">Reasons for exclusion from the calculation of coverage:</div>
      <div className="mx-[10px] mt-[7px] h-[241px] border border-[#dcdcdc]" />
      <div className="mt-[9px] mx-[10px] flex items-center">
        <Svg w={15} h={15}>
          <circle cx="7.5" cy="7.5" r="6.8" stroke="#2b9be0" strokeWidth="1.2" />
          <path d="M7.5 3.5V5.2M7.5 6.5V11.5" stroke="#2b9be0" strokeWidth="1.5" />
        </Svg>
        <span className="ml-[6px] flex-1 pt-[2px]">The edited contents are not updated in the elements that have already been set.</span>
        <div className="w-[80px] h-[23px] bg-[#f0f0f0] border border-[#5a5a5a] flex items-center justify-center pt-[2px]">OK</div>
        <div className="w-[80px] h-[23px] bg-[#f0f0f0] border border-[#adadad] flex items-center justify-center ml-[5px] pt-[2px]">Cancel</div>
      </div>
      <div className="absolute left-[115px] top-[76px] w-[174px] bg-white border border-[#7a7a7a] flex flex-col">
        <div className="h-[21px] bg-[#d5d5d5] flex items-center pl-[2px] pt-[2px]">Derive from Source</div>
        <div className="h-[21px] flex items-center pl-[2px] pt-[2px]">Derive to Target</div>
        <div className="h-[21px] flex items-center pl-[2px] pt-[2px]">Derive Source and Target</div>
      </div>
      <Svg w={14} h={21} className="absolute left-[246px] top-[91px]">
        <path d="M0.5 0.5V16L4 13L6.5 19.5L9 18.5L6.5 12.5H11.5Z" fill="#fff" stroke="#111" />
      </Svg>
    </div>
  );
}

function TitleIcons() {
  return (
    <div className="flex items-center gap-[13px] pl-[9px] text-[#c8d6ea]">
      <Svg w={15} h={15}>
        <path d="M0.5 0.5H12L14.5 3V14.5H0.5Z" stroke="#c8d6ea" />
        <rect x="3" y="1" width="8" height="5" stroke="#c8d6ea" />
        <rect x="3" y="9" width="9" height="5" fill="#c8d6ea" />
      </Svg>
      <Svg w={15} h={15}>
        <path d="M0 6H6L7 8H14V14H0Z" fill="#c8d6ea" />
        <path d="M2 3L5 0.5V2H11V6H9V4H5V5.5Z" fill="#c8d6ea" />
      </Svg>
      <Svg w={15} h={15}>
        <path d="M5 2L1 6L5 10M1 6H10C12.5 6 14 7.5 14 10C14 12 13 13 11 14" stroke="#c8d6ea" strokeWidth="1.5" />
      </Svg>
      <Svg w={15} h={15}>
        <path d="M10 2L14 6L10 10M14 6H5C2.5 6 1 7.5 1 10C1 12 2 13 4 14" stroke="#c8d6ea" strokeWidth="1.5" />
      </Svg>
    </div>
  );
}

const menus = ['File', 'Home', 'View', 'Traceability', 'Product Line', 'Git', 'Team Collaboration', 'Profile', 'Help'];

export default function App() {
  return (
    <div className="w-[1280px] h-[720px] relative overflow-hidden border border-[#2b579a] flex flex-col font-['Noto_Sans',sans-serif] bg-[#e1e2e4]">
      <div className="h-[32px] shrink-0 bg-[#2b579a] flex items-center relative">
        <TitleIcons />
        <div className="absolute left-0 right-0 text-center text-[11.5px] text-[#c5d3e8] whitespace-nowrap pt-px">ADAS Software Development - Next Design</div>
        <div className="flex-1" />
        <div className="w-[10px] h-px bg-[#c8d6ea] mr-[34px]" />
        <Svg w={10} h={10} className="mr-[33px]">
          <rect x="0.5" y="0.5" width="9" height="9" stroke="#c8d6ea" />
        </Svg>
        <Svg w={11} h={11} className="mr-[17px]">
          <path d="M0.5 0.5L10.5 10.5M10.5 0.5L0.5 10.5" stroke="#c8d6ea" />
        </Svg>
      </div>
      <div className="h-[30px] shrink-0 bg-[#f0f0f0] flex pl-[17px] gap-[32px] text-[12.2px] text-[#222] relative">
        {menus.map((m) => (
          <div key={m} className={`h-full flex items-center pt-[3px] border-b-[3px] ${m === 'Traceability' ? 'border-[#2b579a]' : 'border-transparent'}`}>
            {m}
          </div>
        ))}
        <div className="absolute right-[43px] top-[4px] w-[28px] h-[21px] bg-white border border-[#cfcfcf] rounded-[3px] flex items-center justify-center">
          <Svg w={13} h={12}>
            <path d="M1.5 0.5H11.5V7.5H7L5 11V7.5H1.5Z" stroke="#333" />
          </Svg>
        </div>
        <div className="absolute right-[8px] top-[4px] w-[27px] h-[21px] bg-white border border-[#cfcfcf] rounded-[3px] flex items-center justify-center">
          <Svg w={10} h={6}>
            <path d="M0.5 5.5L5 1L9.5 5.5" stroke="#2b579a" strokeWidth="1.2" />
          </Svg>
        </div>
      </div>
      <Ribbon />
      <div className="h-[532px] shrink-0 flex">
        <LeftPane />
        <RightPane />
      </div>
      <StatusBar />
      <Connectors />
      <Dialog />
    </div>
  );
}
